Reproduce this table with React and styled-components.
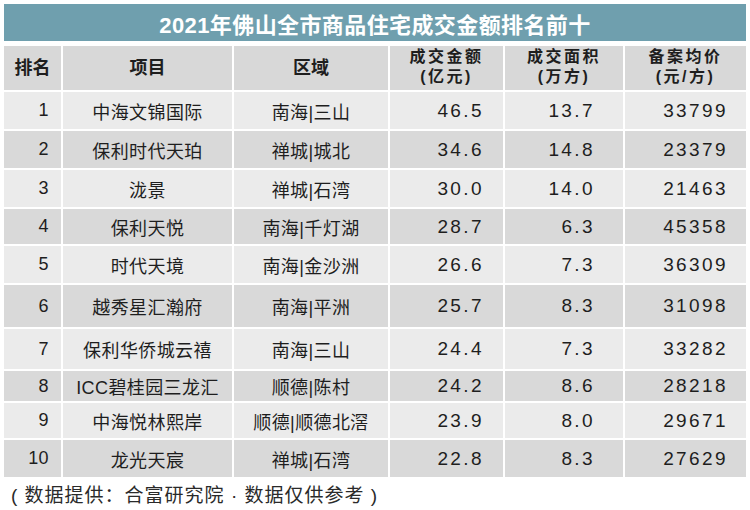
import React from "react";
import styled, { createGlobalStyle } from "styled-components";

const GlobalStyle = createGlobalStyle`
  html, body {
    margin: 0;
    padding: 0;
    background: #ffffff;
  }
  body {
    font-family: "Liberation Sans", "Noto Sans CJK SC", sans-serif;
    color: #1e1e1e;
  }
`;

const Page = styled.div`
  width: 742px;
  padding: 4px 4px 0 4px;
`;

const TitleBar = styled.div`
  height: 37px;
  background: #6f9fae;
  color: #ffffff;
  font-size: 22px;
  font-weight: bold;
  letter-spacing: 0.4px;
  display: flex;
  align-items: center;
  justify-content: center;
`;

const Table = styled.div`
  margin-top: 5px;
  display: grid;
  grid-template-columns: 57px 169px 154px 113px 118px 121px;
  column-gap: 2px;
  row-gap: 2px;
`;

const HeadCell = styled.div`
  height: 44px;
  background: #d8d8d8;
  font-weight: bold;
  font-size: ${(p) => (p.$small ? "16px" : "18px")};
  letter-spacing: ${(p) => (p.$small ? "2.5px" : "0")};
  line-height: 20px;
  display: flex;
  flex-direction: column;
  align-items: center;
  justify-content: center;
  text-align: center;
  padding-bottom: ${(p) => (p.$small ? "2px" : "0")};
  box-sizing: border-box;
`;

const Cell = styled.div`
  height: ${(p) => p.$h}px;
  background: ${(p) => (p.$dark ? "#d9d9d9" : "#ebebeb")};
  font-size: ${(p) => (p.$num ? "19px" : "18px")};
  display: flex;
  align-items: center;
  justify-content: ${(p) => (p.$right ? "flex-end" : "center")};
  padding-right: ${(p) => p.$pr || 0}px;
  letter-spacing: ${(p) => (p.$num ? "2.4px" : "0.4px")};
  box-sizing: border-box;
  white-space: nowrap;
`;

const Caption = styled.div`
  margin-top: 8px;
  padding-left: 7px;
  font-size: 19px;
  line-height: 22px;
  letter-spacing: 1px;
  color: #2a2a2a;
  white-space: nowrap;
`;

const rows = [
  { rank: 1, name: "中海文锦国际", area: "南海|三山", amount: "46.5", size: "13.7", price: "33799", h: 37 },
  { rank: 2, name: "保利时代天珀", area: "禅城|城北", amount: "34.6", size: "14.8", price: "23379", h: 37 },
  { rank: 3, name: "泷景", area: "禅城|石湾", amount: "30.0", size: "14.0", price: "21463", h: 37 },
  { rank: 4, name: "保利天悦", area: "南海|千灯湖", amount: "28.7", size: "6.3", price: "45358", h: 35 },
  { rank: 5, name: "时代天境", area: "南海|金沙洲", amount: "26.6", size: "7.3", price: "36309", h: 37 },
  { rank: 6, name: "越秀星汇瀚府", area: "南海|平洲", amount: "25.7", size: "8.3", price: "31098", h: 42 },
  { rank: 7, name: "保利华侨城云禧", area: "南海|三山", amount: "24.4", size: "7.3", price: "33282", h: 40 },
  { rank: 8, name: "ICC碧桂园三龙汇", area: "顺德|陈村", amount: "24.2", size: "8.6", price: "28218", h: 30 },
  { rank: 9, name: "中海悦林熙岸", area: "顺德|顺德北滘", amount: "23.9", size: "8.0", price: "29671", h: 35 },
  { rank: 10, name: "龙光天宸", area: "禅城|石湾", amount: "22.8", size: "8.3", price: "27629", h: 37 },
];

export default function App() {
  return (
    <>
      <GlobalStyle />
      <Page>
        <TitleBar>2021年佛山全市商品住宅成交金额排名前十</TitleBar>
        <Table>
          <HeadCell>排名</HeadCell>
          <HeadCell>项目</HeadCell>
          <HeadCell>区域</HeadCell>
          <HeadCell $small>
            <span>成交金额</span>
            <span>(亿元)</span>
          </HeadCell>
          <HeadCell $small>
            <span>成交面积</span>
            <span>(万方)</span>
          </HeadCell>
          <HeadCell $small>
            <span>备案均价</span>
            <span>(元/方)</span>
          </HeadCell>
          {rows.map((r, i) => {
            const dark = i % 2 === 1;
            return (
              <React.Fragment key={r.rank}>
                <Cell $h={r.h} $dark={dark} $right $pr={12}>
                  {r.rank}
                </Cell>
                <Cell $h={r.h} $dark={dark}>
                  {r.name}
                </Cell>
                <Cell $h={r.h} $dark={dark}>
                  {r.area}
                </Cell>
                <Cell $h={r.h} $dark={dark} $right $pr={19} $num>
                  {r.amount}
                </Cell>
                <Cell $h={r.h} $dark={dark} $right $pr={28} $num>
                  {r.size}
                </Cell>
                <Cell $h={r.h} $dark={dark} $right $pr={18} $num>
                  {r.price}
                </Cell>
              </React.Fragment>
            );
          })}
        </Table>
        <Caption>( 数据提供：合富研究院 · 数据仅供参考 )</Caption>
      </Page>
    </>
  );
}
